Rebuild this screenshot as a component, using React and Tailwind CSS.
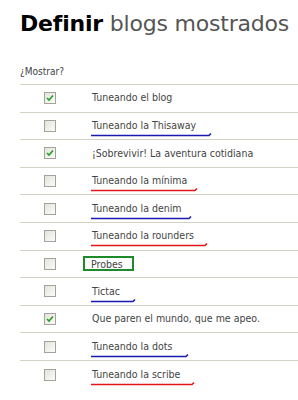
import React from 'react'

const rows = [
    { name: 'Tuneando el blog', checked: true },
    { name: 'Tuneando la Thisaway', mark: 'blue', w: 121 },
    { name: '¡Sobrevivir! La aventura cotidiana', checked: true },
    { name: 'Tuneando la mínima', mark: 'red', w: 107 },
    { name: 'Tuneando la denim', mark: 'blue', w: 101 },
    { name: 'Tuneando la rounders', mark: 'red', w: 117 },
    { name: 'Probes', mark: 'box' },
    { name: 'Tictac', mark: 'blue', w: 45 },
    { name: 'Que paren el mundo, que me apeo.', checked: true },
    { name: 'Tuneando la dots', mark: 'blue', w: 98 },
    { name: 'Tuneando la scribe', mark: 'red', w: 104 },
]

function Check({ checked }) {
    return (
        <span className="w-[12px] h-[12px] border border-[#a3a39c] bg-gradient-to-br from-[#e4e3dc] to-[#fbfbf9] flex items-center justify-center">
            {checked && (
                <svg width="8" height="8" viewBox="0 0 8 8">
                    <path d="M1 4 L3 6 L7 1.5" fill="none" stroke="#21a121" strokeWidth="1.6" />
                </svg>
            )}
        </span>
    )
}

function Name({ r }) {
    if (r.mark === 'box') {
        return (
            <span className="ml-[-9px] border-2 border-[#1f8a2a] px-[6px] h-[15px] w-[51px] flex items-center leading-none">
                {r.name}
            </span>
        )
    }
    return (
        <span className="relative">
            {r.name}
            {r.mark && (
                <svg
                    className="absolute left-[-2px] top-[14px]"
                    width={r.w + 2}
                    height="5"
                    viewBox={`0 0 ${r.w + 2} 5`}
                >
                    <path
                        d={`M1 3.5 L${r.w - 2} 3.5 L${r.w} 1.5`}
                        fill="none"
                        stroke={r.mark === 'red' ? '#e3141a' : '#1a1ab0'}
                        strokeWidth="1.6"
                    />
                </svg>
            )}
        </span>
    )
}

export default function App() {
    return (
        <div className="w-[298px] h-[400px] bg-white pl-[20px] pt-[10px] font-['DejaVu_Sans_Condensed','DejaVu_Sans',sans-serif] overflow-hidden">
            <h1 className="text-[22px] leading-[28px] text-[#555] font-['DejaVu_Sans',sans-serif] tracking-[-0.2px]">
                <span className="font-bold text-black">Definir</span> blogs mostrados
            </h1>
            <p className="mt-[26px] text-[10px] text-[#444] h-[20px]">¿Mostrar?</p>
            <div className="border-t border-[#d4d2c6]">
                {rows.map((r, i) => (
                    <div
                        key={i}
                        className={`h-[27.6px] flex items-center text-[10.5px] text-[#444] ${i < rows.length - 1 ? 'border-b border-[#d4d2c6]' : ''}`}
                    >
                        <div className="w-[72px] flex pl-[24px]">
                            <Check checked={r.checked} />
                        </div>
                        <Name r={r} />
                    </div>
                ))}
            </div>
        </div>
    )
}
